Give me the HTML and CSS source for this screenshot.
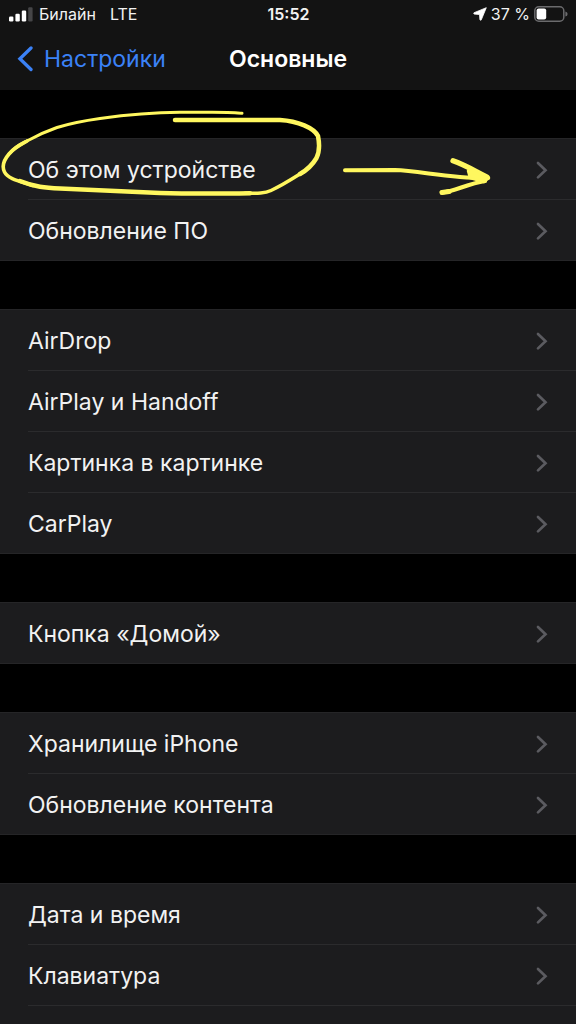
FILE: index.html
```html
<!DOCTYPE html>
<html lang="ru">
<head>
<meta charset="utf-8">
<meta name="viewport" content="width=device-width, initial-scale=1">
<title>Основные</title>
<link rel="stylesheet" href="styles.css">
</head>
<body>
<svg class="sprite" aria-hidden="true">
  <symbol id="chevron" viewBox="0 0 12 20"><path d="M2 3 L9.5 10.200 L2 17.400" fill="none" stroke="currentColor" stroke-width="2.700" stroke-linecap="round" stroke-linejoin="miter"/></symbol>
</svg>
<header class="header">
  <div class="status">
    <div class="status-side">
      <svg class="signal" viewBox="0 0 24 16" aria-hidden="true">
        <rect x="0" y="10.500" width="4.4" height="5" rx="1.2" fill="#fff"/>
        <rect x="6.4" y="7.8" width="4.4" height="7.700" rx="1.2" fill="#fff"/>
        <rect x="12.8" y="4.600" width="4.4" height="10.900" rx="1.2" fill="#fff"/>
        <rect x="19.2" y="1.300" width="4.4" height="14.2" rx="1.2" fill="#454547"/>
      </svg>
      <span class="carrier">Билайн</span>
      <span class="network">LTE</span>
    </div>
    <span class="time">15:52</span>
    <div class="status-side status-right">
      <svg class="location" viewBox="0 0 14 14" aria-hidden="true"><path d="M13.3 0.700 L8.3 12.8 Q7.500 14 6.900 12.600 L6.500 7.500 L1.300 7.100 Q0 6.500 1.100 5.700 Z" fill="#fff" stroke="#fff" stroke-width="0.800" stroke-linejoin="round"/></svg>
      <span>37 %</span>
      <svg class="battery" viewBox="0 0 34 16" aria-hidden="true">
        <rect x="0.8" y="0.8" width="29" height="14.4" rx="4" fill="none" stroke="#6b6b6d" stroke-width="1.5"/>
        <rect x="2.6" y="2.6" width="9.6" height="10.8" rx="2" fill="#fff"/>
        <path d="M31.4 5.4 Q33.6 6 33.6 8 Q33.6 10 31.4 10.6 Z" fill="#6b6b6d"/>
      </svg>
    </div>
  </div>
  <nav class="nav">
    <a class="back" href="#"><svg class="back-icon" viewBox="0 0 16 26" aria-hidden="true"><path d="M14 2 L2.900 12.700 L14 23.500" fill="none" stroke="currentColor" stroke-width="3.300" stroke-linecap="round" stroke-linejoin="miter"/></svg>Настройки</a>
    <h1 class="title">Основные</h1>
  </nav>
</header>
<main class="list">
  <section class="group">
    <a class="row" href="#"><span>Об этом устройстве</span><svg class="chevron" aria-hidden="true"><use href="#chevron"/></svg></a>
    <a class="row" href="#"><span>Обновление ПО</span><svg class="chevron" aria-hidden="true"><use href="#chevron"/></svg></a>
    <svg class="marker" viewBox="0 0 500 100" aria-hidden="true">
      <g fill="none" stroke="#fff75f" stroke-linecap="round" stroke-linejoin="round">
        <path d="M242 13.300 C232 11.500 215 12.300 180 12.300 C150 12.500 125 15 100 18.500 C82 21 70 23.500 57 27.500 C44 32 36 36 27 41 C18 46 14 48 9 54" stroke-width="3"/>
        <path d="M27 41 C18 46 14 48 9 54 C3 61 2 67 4.500 72 C8 79 19 81 33 85.500" stroke-width="3.600"/>
        <path d="M20 81 C35 87 45 88 60 88.500 C95 90 130 91.500 160 93 C195 94 225 93.500 250 93.300" stroke-width="4.500"/>
        <path d="M245 93.300 C258 93.500 265 93.500 271 90.500 C283 85 292 79 304 71.500" stroke-width="3.500"/>
        <path d="M175 20 L280 20 C298 21 314 28 318 36 C320 46 319 53 316.500 58 C313 64 307 70 300 74" stroke-width="4.500"/>
        <path d="M345 70.300 L395 70 C420 71 455 79 488 78" stroke-width="4"/>
        <path d="M453 60.800 C465 65 473 70 487 77" stroke-width="5.300"/>
        <path d="M442 92.500 C455 91 467 84 485 81" stroke-width="4.200"/>
        <path d="M442 92.500 L449 91.500" stroke-width="5.200"/>
        <path d="M468 71 L489 78 L484 82 L470 78 Z" fill="#fff75f" stroke-width="2.500"/>
      </g>
    </svg>
  </section>
  <section class="group">
    <a class="row" href="#"><span>AirDrop</span><svg class="chevron" aria-hidden="true"><use href="#chevron"/></svg></a>
    <a class="row" href="#"><span>AirPlay и Handoff</span><svg class="chevron" aria-hidden="true"><use href="#chevron"/></svg></a>
    <a class="row" href="#"><span>Картинка в картинке</span><svg class="chevron" aria-hidden="true"><use href="#chevron"/></svg></a>
    <a class="row" href="#"><span>CarPlay</span><svg class="chevron" aria-hidden="true"><use href="#chevron"/></svg></a>
  </section>
  <section class="group">
    <a class="row" href="#"><span>Кнопка «Домой»</span><svg class="chevron" aria-hidden="true"><use href="#chevron"/></svg></a>
  </section>
  <section class="group">
    <a class="row" href="#"><span>Хранилище iPhone</span><svg class="chevron" aria-hidden="true"><use href="#chevron"/></svg></a>
    <a class="row" href="#"><span>Обновление контента</span><svg class="chevron" aria-hidden="true"><use href="#chevron"/></svg></a>
  </section>
  <section class="group group-open">
    <a class="row" href="#"><span>Дата и время</span><svg class="chevron" aria-hidden="true"><use href="#chevron"/></svg></a>
    <a class="row" href="#"><span>Клавиатура</span><svg class="chevron" aria-hidden="true"><use href="#chevron"/></svg></a>
  </section>
</main>
</body>
</html>
```
FILE: styles.css
```css
* {
  box-sizing: border-box;
}

body {
  margin: 0;
  min-height: 100vh;
  display: flex;
  flex-direction: column;
  background: #000;
  color: #f2f2f2;
  font-family: Inter, "Liberation Sans", sans-serif;
}

a {
  color: inherit;
  text-decoration: none;
}

svg {
  display: block;
  flex: none;
}

.sprite {
  position: absolute;
  width: 0;
  height: 0;
}

.header {
  background: #131313;
}

.status,
.nav {
  display: grid;
  grid-template-columns: 1fr auto 1fr;
  align-items: center;
}

.status {
  height: 28px;
  padding: 0 8px 0 9px;
  font-size: 16px;
  line-height: 20px;
}

.status-side {
  display: flex;
  align-items: center;
  gap: 6px;
}

.status-right {
  justify-content: flex-end;
  gap: 4px;
}

.signal {
  width: 24px;
  height: 16px;
}

.network {
  margin-left: 8px;
}

.time {
  font-weight: 600;
}

.location {
  width: 14px;
  height: 14px;
}

.battery {
  width: 34px;
  height: 16px;
}

.nav {
  height: 62px;
  padding: 0 17px;
}

.back {
  display: flex;
  align-items: center;
  gap: 11px;
  color: #3b82f7;
  font-size: 23px;
}

.back-icon {
  width: 16px;
  height: 26px;
}

.title {
  margin: 0;
  color: #fff;
  font-size: 23px;
  font-weight: 600;
}

.list {
  flex: 1;
  display: flex;
  flex-direction: column;
  gap: 48px;
  padding-top: 48px;
}

.group {
  position: relative;
  background: #1c1c1e;
  border-top: 1px solid #252527;
}

.group-open {
  flex: 1;
}

.row {
  display: flex;
  align-items: center;
  justify-content: space-between;
  height: 61px;
  margin-left: 28px;
  padding-top: 1px;
  padding-right: 28px;
  border-bottom: 1px solid #2b2b2d;
  font-size: 23px;
}

.group:not(.group-open) .row:nth-last-of-type(1) {
  margin-left: 0;
  padding-left: 28px;
  border-bottom-color: #252527;
}

.chevron {
  width: 12px;
  height: 20px;
  color: #5b5b60;
}

.marker {
  position: absolute;
  top: -39px;
  left: 0;
  width: 500px;
  height: 100px;
  overflow: visible;
  pointer-events: none;
}
```
